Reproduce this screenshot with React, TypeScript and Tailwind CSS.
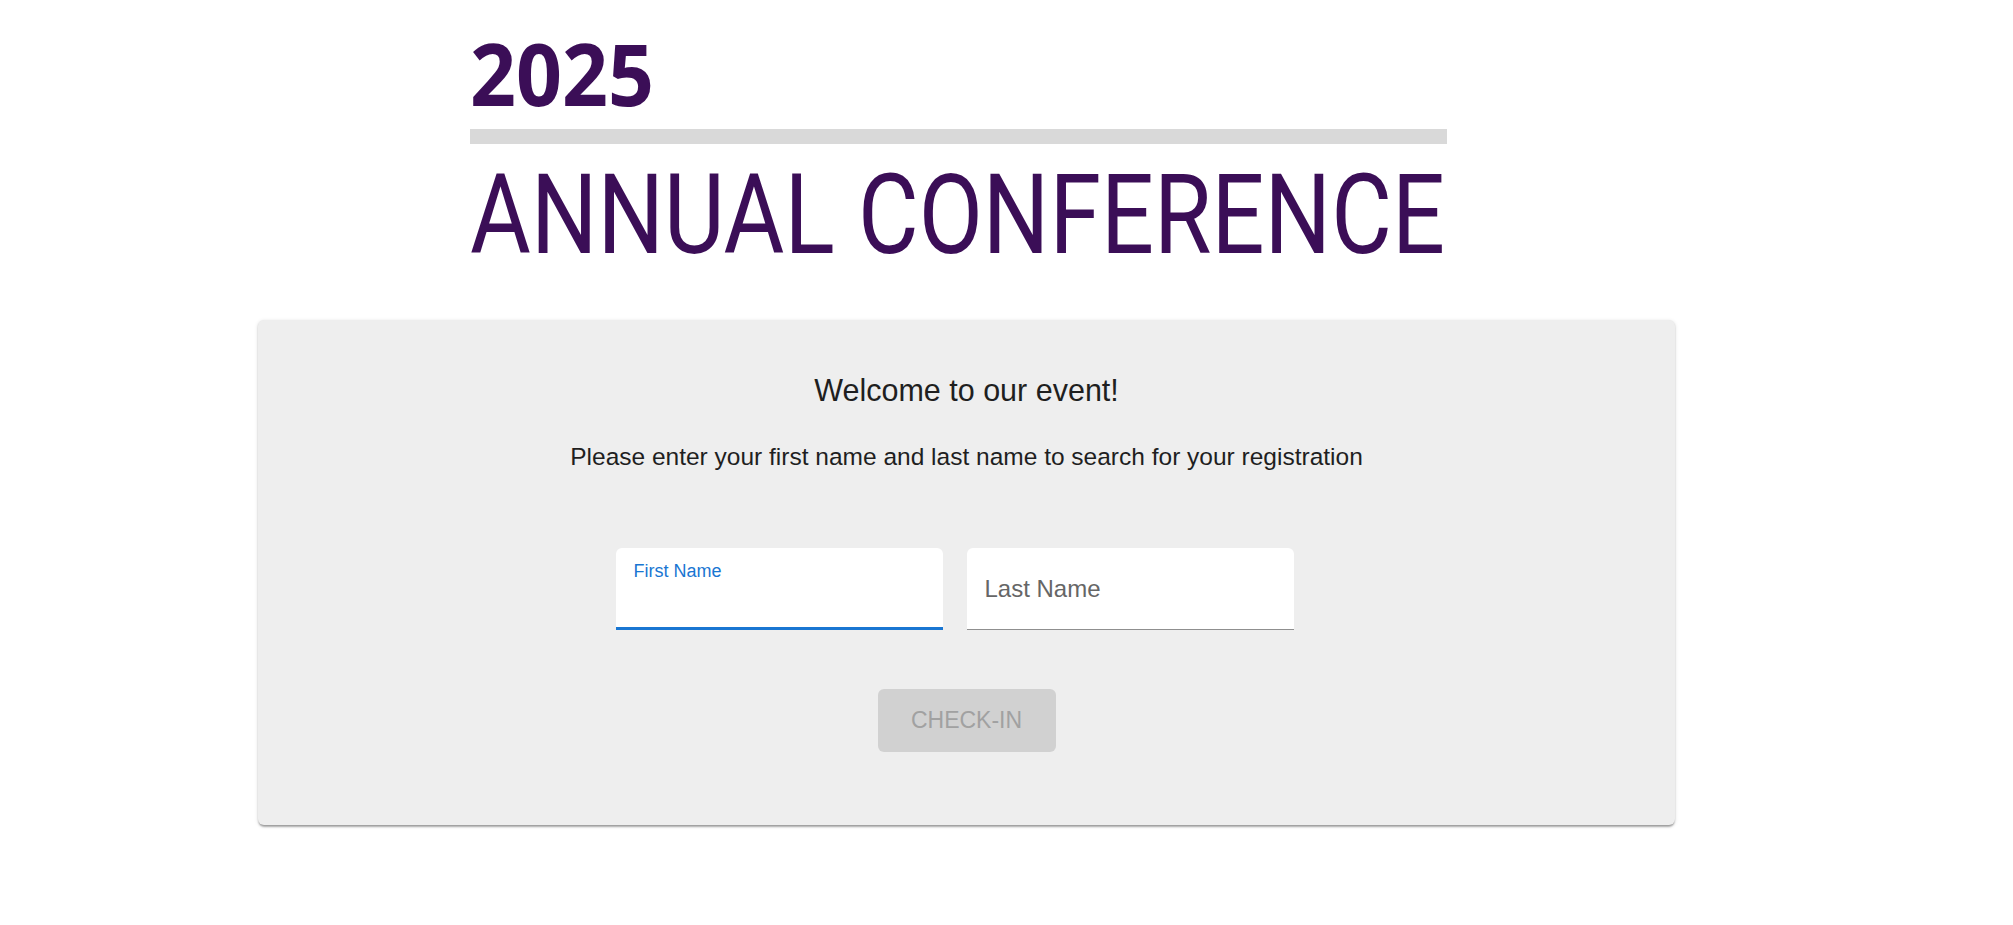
import { useState } from "react";

// Logo del encabezado: "2025" + barra + "ANNUAL CONFERENCE"
const ConferenceLogo = () => (
  <svg width="980" height="250" viewBox="0 0 980 250" className="block overflow-visible">
    <text
      x="0"
      y="84"
      fontFamily="'Open Sans', 'DejaVu Sans', sans-serif"
      fontWeight="700"
      fontSize="86"
      fill="#3b0e57"
      textLength="184"
      lengthAdjust="spacingAndGlyphs"
    >
      2025
    </text>
    <rect x="0" y="107" width="977" height="15" fill="#d9d9d9" />
    <text
      x="0"
      y="231"
      fontFamily="Roboto, 'DejaVu Sans', sans-serif"
      fontWeight="400"
      fontSize="112"
      fill="#3b0e57"
      textLength="975"
      lengthAdjust="spacingAndGlyphs"
    >
      ANNUAL CONFERENCE
    </text>
  </svg>
);

const App = () => {
  const [firstName, setFirstName] = useState("");
  const [lastName, setLastName] = useState("");

  return (
    <div className="min-h-screen bg-white font-['Liberation_Sans',Arial,sans-serif]">
      <div className="ml-[258px] w-[1417px] pt-[22px]">
        {/* Encabezado */}
        <div className="ml-[212px]">
          <ConferenceLogo />
        </div>

        {/* Tarjeta de registro */}
        <div className="mt-[48px] flex flex-col items-center rounded-[6px] bg-[#eeeeee] pt-[52px] pb-[73px] shadow-[0_3px_2px_-1px_rgba(0,0,0,0.25),0_1px_2px_0_rgba(0,0,0,0.14),0_1px_4px_0_rgba(0,0,0,0.12)]">
          <h2 className="text-[30.5px] leading-[36px] text-[#1f1f1f]">Welcome to our event!</h2>
          <p className="mt-[31px] text-[24.5px] leading-[36px] text-[#1f1f1f]">
            Please enter your first name and last name to search for your registration
          </p>

          <div className="mt-[73px] flex">
            <div className="relative mr-[24px] h-[82px] w-[327px] rounded-t-[6px] bg-white">
              <label className="absolute left-[18px] top-[10px] text-[18px] leading-[26px] text-[#1976d2]">
                First Name
              </label>
              <input
                value={firstName}
                onChange={(e) => setFirstName(e.target.value)}
                className="absolute left-0 right-0 top-[37px] h-[36px] bg-transparent px-[18px] text-[24px] text-[#1f1f1f] outline-none"
              />
              <div className="absolute bottom-0 left-0 right-0 h-[3px] bg-[#1976d2]" />
            </div>
            <div className="relative mr-[24px] h-[82px] w-[327px] rounded-t-[6px] bg-white">
              {!lastName && (
                <label className="pointer-events-none absolute left-[18px] top-[24px] text-[24px] leading-[34px] text-[#666666]">
                  Last Name
                </label>
              )}
              <input
                value={lastName}
                onChange={(e) => setLastName(e.target.value)}
                className="absolute left-0 right-0 top-[37px] h-[36px] bg-transparent px-[18px] text-[24px] text-[#1f1f1f] outline-none"
              />
              <div className="absolute bottom-0 left-0 right-0 h-px bg-[#8f8f8f]" />
            </div>
          </div>

          <button
            disabled={!firstName || !lastName}
            className="mt-[59px] h-[63px] w-[178px] rounded-[6px] bg-[#d1d1d1] text-[23px] text-[#a1a1a1]"
          >
            CHECK-IN
          </button>
        </div>
      </div>
    </div>
  );
};

export default App;
